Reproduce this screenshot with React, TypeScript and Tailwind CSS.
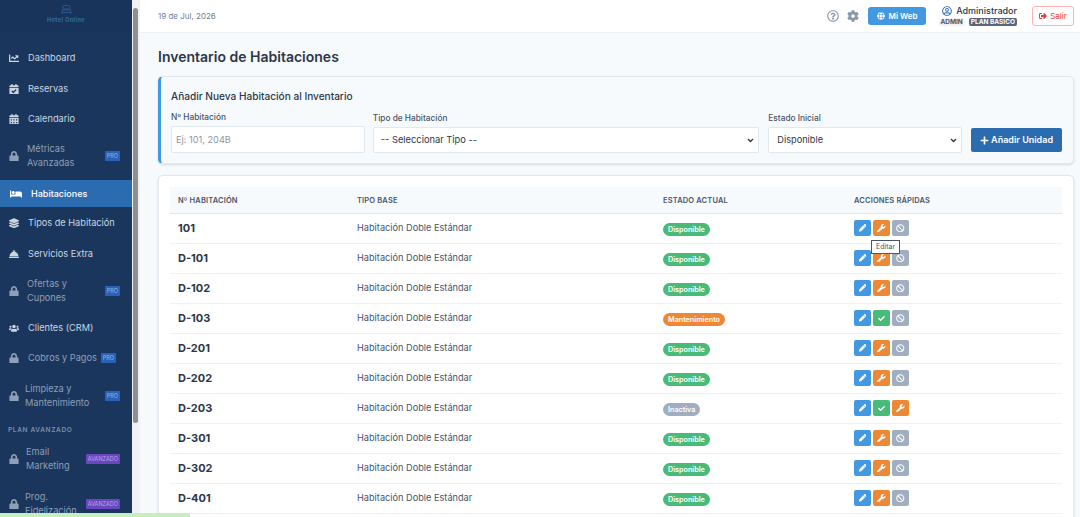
import { FaChartLine, FaCalendarCheck, FaCalendarAlt, FaLock, FaBed, FaLayerGroup, FaConciergeBell, FaUsers, FaGlobe, FaCog, FaRegQuestionCircle, FaRegUserCircle, FaSignOutAlt, FaPen, FaWrench, FaBan, FaCheck, FaPlus } from "react-icons/fa";
import type { ReactNode } from "react";

function NavItem({ icon, label, active, muted, badge, gap = "gap-[9px]", className = "" }: { icon: ReactNode; label: ReactNode; active?: boolean; muted?: boolean; badge?: string; gap?: string; className?: string }) {
  const two = typeof label !== "string";
  const height = active ? "h-[27px]" : two ? "h-[44px] leading-[14px]" : "h-[30px]";
  const tone = active ? "bg-[#2b6cb0] text-white font-medium text-[9px] pl-[10px]" : muted ? "text-[#8f9fb5] text-[9.2px] pl-[9px]" : "text-[#cbd5e0] text-[9.2px] pl-[9px]";
  return (
    <div className={`flex items-center ${gap} pr-[12px] whitespace-nowrap ${height} ${tone} ${className}`}>
      <span className={`${active ? "w-[12px] text-[12px]" : "w-[10px] text-[10.5px]"} flex justify-center shrink-0`}>{icon}</span>
      <span className="flex-1 min-w-0">{label}</span>
      {badge === "PRO" && <span className="text-[5.5px] leading-[8px] px-[2px] py-px bg-[#2b62b5] text-[#93b4e0] rounded-[1px] shrink-0">PRO</span>}
      {badge === "AV" && <span className="text-[5.5px] leading-[8px] px-[2px] py-px bg-[#6b46c1] text-[#b9a4e6] rounded-[1px] shrink-0">AVANZADO</span>}
    </div>
  );
}

function Sidebar() {
  return (
    <aside className="w-[132px] shrink-0 h-full bg-[#1a365d] overflow-hidden">
      <div className="h-[32px] bg-[#19345a] flex flex-col items-center pt-[5px]">
        <svg width="11" height="10" viewBox="0 0 11 10" fill="none" stroke="#2b5a94" strokeWidth="0.9">
          <path d="M2 5V2a1.5 1.5 0 0 1 1.5-1.5h4A1.5 1.5 0 0 1 9 2v3" />
          <path d="M1 9V6.5A1.5 1.5 0 0 1 2.5 5h6A1.5 1.5 0 0 1 10 6.5V9M1 7.5h9" />
          <path d="M3.5 5V3.8h4V5" />
        </svg>
        <span className="text-[5.5px] font-bold tracking-[0.08em] leading-[8px] mt-px text-[#2b6cb0]">Hotel Online</span>
      </div>
      <nav className="pt-[11px]">
        <NavItem icon={<FaChartLine />} label="Dashboard" className="mb-px" />
        <NavItem icon={<FaCalendarCheck />} label="Reservas" />
        <NavItem icon={<FaCalendarAlt />} label="Calendario" />
        <NavItem icon={<FaLock />} label={<>Métricas<br />Avanzadas</>} muted badge="PRO" gap="gap-[8px]" />
        <NavItem icon={<FaBed />} label="Habitaciones" active className="mt-[2px] mb-px" />
        <NavItem icon={<FaLayerGroup />} label="Tipos de Habitación" />
        <NavItem icon={<FaConciergeBell />} label="Servicios Extra" className="mt-px" />
        <NavItem icon={<FaLock />} label={<>Ofertas y<br />Cupones</>} muted badge="PRO" gap="gap-[8px]" />
        <NavItem icon={<FaUsers />} label="Clientes (CRM)" />
        <NavItem icon={<FaLock />} label="Cobros y Pagos" muted badge="PRO" className="pr-[16px]" />
        <NavItem icon={<FaLock />} label={<>Limpieza y<br />Mantenimiento</>} muted badge="PRO" gap="gap-[6px]" className="mt-px" />
        <div className="h-[19px] pl-[8px] pt-[7px] flex items-center text-[6.5px] font-semibold tracking-[0.1em] text-[#7c8ea8]">PLAN AVANZADO</div>
        <NavItem icon={<FaLock />} label={<>Email<br />Marketing</>} muted badge="AV" gap="gap-[7px]" />
        <NavItem icon={<FaLock />} label={<>Prog.<br />Fidelización</>} muted badge="AV" gap="gap-[6px]" className="mt-px" />
      </nav>
    </aside>
  );
}

function Header() {
  return (
    <header className="h-[33px] shrink-0 bg-white border-b border-[#edf2f7] flex items-center pl-[18px] pr-[6px]">
      <span className="text-[8px] text-[#718096]">19 de Jul, 2026</span>
      <div className="ml-auto flex items-center -mt-[1px]">
        <FaRegQuestionCircle className="text-[12px] text-[#8a97a8]" />
        <FaCog className="text-[12px] text-[#8a97a8] ml-[8px]" />
        <div className="ml-[9px] h-[18px] w-[58px] bg-[#4299e1] rounded-[3px] flex items-center justify-center gap-[4px] text-white text-[8px] font-semibold">
          <FaGlobe className="text-[8px]" />Mi Web
        </div>
        <div className="ml-[11px] w-[80px] flex flex-col items-end whitespace-nowrap">
          <div className="flex items-center gap-[4px] text-[9px] font-medium text-[#2d3748] leading-[12px]">
            <FaRegUserCircle className="text-[10px] text-[#2b6cb0]" />Administrador
          </div>
          <div className="flex items-center gap-[5px] mt-px leading-[8px]">
            <span className="text-[6.5px] font-bold text-[#4a5568] bg-[#edf2f7] rounded-[2px] px-[1px] shrink-0">ADMIN</span>
            <span className="text-[6.5px] font-bold text-white bg-[#5a6678] rounded-[2px] px-[2px] shrink-0">PLAN BASICO</span>
          </div>
        </div>
        <div className="ml-[15px] h-[20px] w-[42px] border border-[#feb2b2] rounded-[3px] flex items-center justify-center gap-[3px] text-[#e53e3e] text-[8px]">
          <FaSignOutAlt className="text-[8px]" />Salir
        </div>
      </div>
    </header>
  );
}

function Field({ label, className, children }: { label: string; className: string; children: ReactNode }) {
  return (
    <div className={className}>
      <div className="text-[8.3px] font-medium text-[#4a5568] leading-[12px] mb-[3px]">{label}</div>
      {children}
    </div>
  );
}

function Chev() {
  return (
    <svg width="7" height="5" viewBox="0 0 7 5" fill="none" stroke="#2d3748" strokeWidth="1.4"><path d="M1 1l2.5 2.5L6 1" /></svg>
  );
}

function AddForm() {
  return (
    <section className="h-[88px] bg-[#f7fafc] border border-[#e2e8f0] border-l-[3px] border-l-[#4299e1] rounded-[5px] pl-[10px] pr-[11px] pt-[12px] shadow-sm">
      <h2 className="text-[10.1px] font-medium text-[#2d3748] leading-[14px]">Añadir Nueva Habitación al Inventario</h2>
      <div className="flex items-end mt-[8px]">
        <Field label="Nº Habitación" className="w-[194px]">
          <div className="h-[27px] bg-white border border-[#e2e8f0] rounded-[2px] flex items-center pl-[4px] text-[9.2px] text-[#8d96a3]">Ej: 101, 204B</div>
        </Field>
        <Field label="Tipo de Habitación" className="w-[387px] ml-[8px]">
          <div className="h-[26px] bg-white border border-[#e2e8f0] rounded-[2px] flex items-center justify-between pl-[7px] pr-[4px] text-[9.3px] text-[#2d3748]">
            -- Seleccionar Tipo --
            <Chev />
          </div>
        </Field>
        <Field label="Estado Inicial" className="w-[194px] ml-[9px]">
          <div className="h-[26px] bg-white border border-[#e2e8f0] rounded-[2px] flex items-center justify-between pl-[8px] pr-[4px] text-[9.2px] text-[#2d3748]">
            Disponible
            <Chev />
          </div>
        </Field>
        <div className="ml-[9px] h-[24px] mb-[1px] w-[91px] bg-[#2b6cb0] rounded-[2px] text-white text-[9px] font-semibold flex items-center justify-center gap-[2px]">
          <FaPlus className="text-[9px]" />Añadir Unidad
        </div>
      </div>
    </section>
  );
}

const statusStyle: Record<string, string> = {
  Disponible: "bg-[#48bb78]",
  Mantenimiento: "bg-[#ed8936]",
  Inactiva: "bg-[#a0aec0]",
};

function Action({ color, children }: { color: string; children: ReactNode }) {
  return <span className={`w-[16.5px] h-[15.5px] rounded-[2px] flex items-center justify-center text-white text-[8.5px] ${color}`}>{children}</span>;
}

const blue = "bg-[#4299e1]", orange = "bg-[#ed8936]", gray = "bg-[#a0aec0]", green = "bg-[#48bb78]";

function Row({ id, status }: { id: string; status: string }) {
  return (
    <tr className="h-[30px] border-b border-[#edf2f7]">
      <td className="pl-[8px] text-[11px] font-bold text-[#2d3748]">{id}</td>
      <td className="pl-[8px] text-[9.2px] text-[#4a5568]">Habitación Doble Estándar</td>
      <td className="pl-[8px]">
        <span className={`inline-block align-middle text-[7.2px] font-semibold leading-[13px] px-[5px] rounded-full text-white ${statusStyle[status]}`}>{status}</span>
      </td>
      <td className="pl-[8px]">
        <div className="flex gap-[2.5px]">
          <Action color={blue}><FaPen className="text-[7.5px]" /></Action>
          {status === "Disponible" && <><Action color={orange}><FaWrench /></Action><Action color={gray}><FaBan /></Action></>}
          {status === "Mantenimiento" && <><Action color={green}><FaCheck className="text-[7px]" /></Action><Action color={gray}><FaBan /></Action></>}
          {status === "Inactiva" && <><Action color={green}><FaCheck className="text-[7px]" /></Action><Action color={orange}><FaWrench /></Action></>}
        </div>
      </td>
    </tr>
  );
}

const rows: [string, string][] = [
  ["101", "Disponible"], ["D-101", "Disponible"], ["D-102", "Disponible"], ["D-103", "Mantenimiento"], ["D-201", "Disponible"],
  ["D-202", "Disponible"], ["D-203", "Inactiva"], ["D-301", "Disponible"], ["D-302", "Disponible"], ["D-401", "Disponible"],
];

function Inventory() {
  return (
    <section className="relative mt-[11px] bg-white border border-[#e2e8f0] rounded-[5px] px-[11px] pt-[11px] pb-[20px] shadow-sm">
      <table className="w-full table-fixed border-collapse">
        <colgroup><col className="w-[179px]" /><col className="w-[306px]" /><col className="w-[191px]" /><col /></colgroup>
        <thead>
          <tr className="h-[26px] bg-[#f7fafc] border-b border-[#e2e8f0] text-[7.5px] font-semibold text-[#4a5568] tracking-[0.02em] text-left">
            <th className="pl-[8px] pt-[2px] font-semibold">Nº HABITACIÓN</th>
            <th className="pl-[8px] pt-[2px] font-semibold">TIPO BASE</th>
            <th className="pl-[8px] pt-[2px] font-semibold">ESTADO ACTUAL</th>
            <th className="pl-[8px] pt-[2px] font-semibold">ACCIONES RÁPIDAS</th>
          </tr>
        </thead>
        <tbody>
          {rows.map(([id, s]) => <Row key={id} id={id} status={s} />)}
        </tbody>
      </table>
      <div className="absolute left-[712px] top-[64px] h-[14px] px-[4px] bg-white border border-[#4a5568] text-[7px] text-[#4a5568] flex items-center">Editar</div>
    </section>
  );
}

export default function App() {
  return (
    <div className="relative flex h-[517px] w-[1080px] overflow-hidden bg-[#f7fafc]" style={{ fontFamily: "Inter, 'Noto Sans', sans-serif" }}>
      <Sidebar />
      <div className="w-[8px] shrink-0 bg-[#f1f1f1] pt-[8px]">
        <div className="mx-[1px] w-[5px] h-[415px] rounded-full bg-[#8f8f8f]" />
      </div>
      <div className="flex-1 min-w-0 flex flex-col">
        <Header />
        <main className="flex-1 min-h-0 pl-[18px] pr-[6px] overflow-hidden">
          <h1 className="text-[14px] font-semibold text-[#2d3748] leading-[20px] mt-[14px] mb-[9px]">Inventario de Habitaciones</h1>
          <AddForm />
          <Inventory />
        </main>
      </div>
      <div className="absolute left-0 bottom-0 w-[190px] h-[4px] bg-[#c6efc0]" />
    </div>
  );
}
